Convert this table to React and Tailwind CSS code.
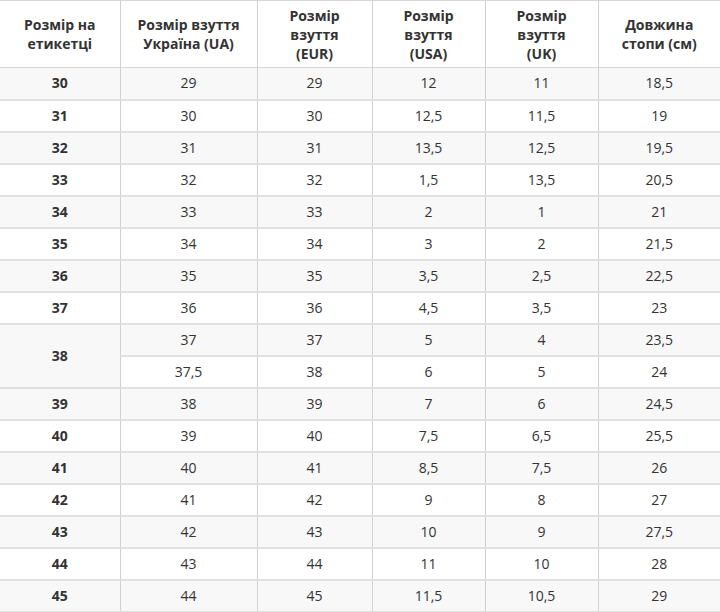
import React from 'react';

const rows = [
  ['30', '29', '29', '12', '11', '18,5'],
  ['31', '30', '30', '12,5', '11,5', '19'],
  ['32', '31', '31', '13,5', '12,5', '19,5'],
  ['33', '32', '32', '1,5', '13,5', '20,5'],
  ['34', '33', '33', '2', '1', '21'],
  ['35', '34', '34', '3', '2', '21,5'],
  ['36', '35', '35', '3,5', '2,5', '22,5'],
  ['37', '36', '36', '4,5', '3,5', '23'],
  ['38', '37', '37', '5', '4', '23,5'],
  [null, '37,5', '38', '6', '5', '24'],
  ['39', '38', '39', '7', '6', '24,5'],
  ['40', '39', '40', '7,5', '6,5', '25,5'],
  ['41', '40', '41', '8,5', '7,5', '26'],
  ['42', '41', '42', '9', '8', '27'],
  ['43', '42', '43', '10', '9', '27,5'],
  ['44', '43', '44', '11', '10', '28'],
  ['45', '44', '45', '11,5', '10,5', '29'],
];

const headers = [
  ['Розмір на', 'етикетці'],
  ['Розмір взуття', 'Україна (UA)'],
  ['Розмір', 'взуття', '(EUR)'],
  ['Розмір', 'взуття', '(USA)'],
  ['Розмір', 'взуття', '(UK)'],
  ['Довжина', 'стопи (см)'],
];

const widths = ['w-[120px]', 'w-[137px]', 'w-[115px]', 'w-[113px]', 'w-[113px]', 'w-[122px]'];

export default function App() {
  return (
    <div className="w-[720px] h-[612px] bg-white font-['Open_Sans',sans-serif] text-[#333] overflow-hidden">
      <table className="w-[720px] table-fixed border-collapse text-[14px]">
        <colgroup>
          {widths.map((w, i) => (
            <col key={i} className={w} />
          ))}
        </colgroup>
        <thead>
          <tr className="h-[67px] border-y border-[#d6d6d6]">
            {headers.map((h, i) => (
              <th
                key={i}
                className={`font-bold leading-[19px] text-center align-middle px-1 ${i > 0 ? 'border-l border-[#d0d0d0]' : ''}`}
              >
                {h.map((line, j) => (
                  <div key={j}>{line}</div>
                ))}
              </th>
            ))}
          </tr>
        </thead>
        <tbody>
          {rows.map((r, i) => (
            <tr
              key={i}
              className={`h-[32px] border-b-2 border-[#e0e0e0] ${i % 2 === 0 ? 'bg-[#f8f8f8]' : 'bg-white'}`}
            >
              {r.map((c, j) => {
                if (c === null) return null;
                const span = i === 8 && j === 0 ? 2 : 1;
                return (
                  <td
                    key={j}
                    rowSpan={span}
                    className={`text-center align-middle leading-5 p-0 ${j === 0 ? 'font-bold bg-[#f8f8f8]' : 'border-l border-[#d0d0d0]'} ${j === 0 && i % 2 === 1 ? 'bg-white' : ''}`}
                  >
                    {c}
                  </td>
                );
              })}
            </tr>
          ))}
        </tbody>
      </table>
    </div>
  );
}
